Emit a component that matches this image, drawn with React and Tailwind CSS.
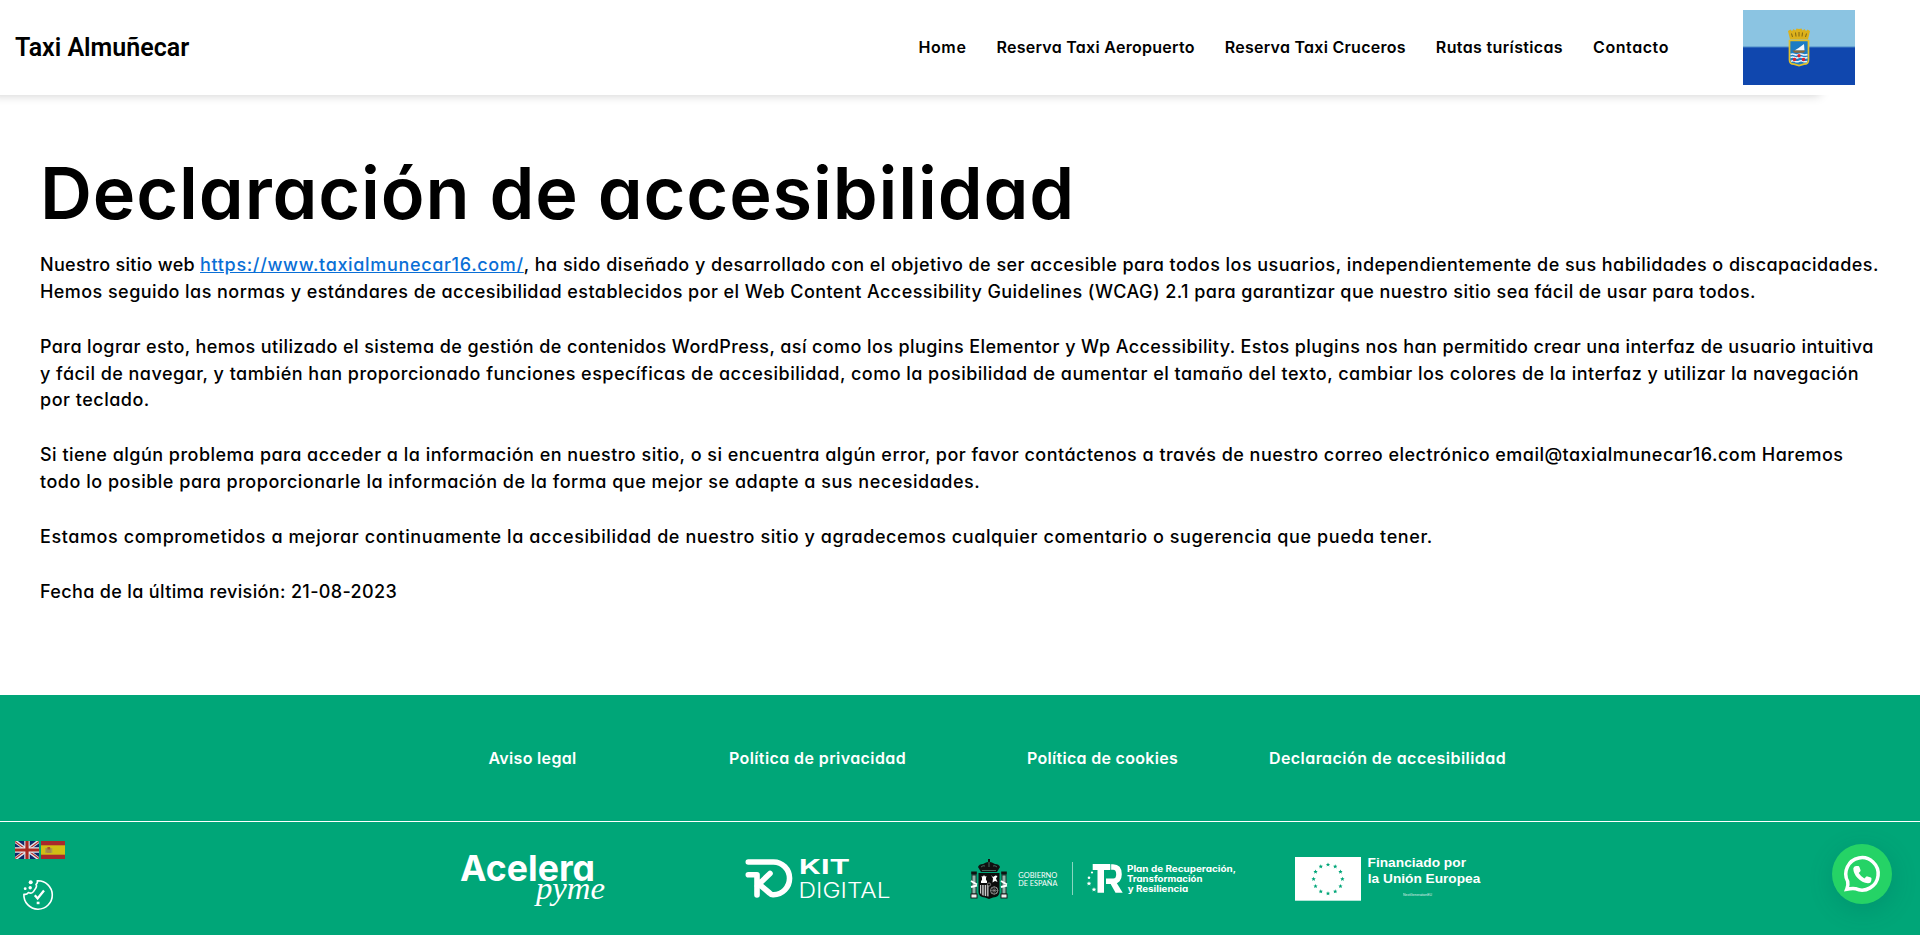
const navItems = [
  { label: "Home", spacing: "tracking-[0.6px]" },
  { label: "Reserva Taxi Aeropuerto", spacing: "tracking-[0.27px]" },
  { label: "Reserva Taxi Cruceros", spacing: "tracking-[0.27px]" },
  { label: "Rutas turísticas", spacing: "tracking-[0.36px]" },
  { label: "Contacto", spacing: "tracking-[0.58px]" },
];

const legalLinks = [
  { label: "Aviso legal", spacing: "tracking-[0.33px]" },
  { label: "Política de privacidad", spacing: "tracking-[0.41px]" },
  { label: "Política de cookies", spacing: "tracking-[0.31px]" },
  { label: "Declaración de accesibilidad", spacing: "tracking-[0.45px]" },
];

function MunicipalFlag() {
  return (
    <svg className="h-[75px] w-[112px]" viewBox="0 0 112 75" role="img" aria-label="Bandera de Almuñécar">
      <rect width="112" height="75" fill="#8bc4e2" />
      <rect y="37" width="112" height="38" fill="#1047ae" />
      <rect y="36.500" width="112" height="1" fill="#4a88c8" />
      <path d="M45 21l2.500-1.500 1.500 1.500 1.500-2 2 1.500 1-2 2.500 0.500 2.500-.5 1 2 2-1.500 1.500 2 1.500-1.500L67 21l-2 8.500H47z" fill="#dcb11c" />
      <path d="M48.500 23.500l1 3.500M52.500 22.500l.5 4M56 22v4.500M59.500 22.500l-.5 4M63.500 23.500l-1 3.500" stroke="#745c12" strokeWidth="0.900" />
      <path d="M46.500 30.500H65.500V50Q65.500 54 61 54.200L56 55.500 51 54.200Q46.500 54 46.500 50z" fill="#1b7cc4" stroke="#e3c02a" strokeWidth="1.700" />
      <path d="M51.500 40.500Q56 38 61 34L61.500 40.500z" fill="#f4f7fa" />
      <path d="M49.500 40.500h13l-2 2.300h-9z" fill="#8d6a3a" />
      <path d="M47.500 44.500q2-1 4 0t4 0 4 0 5 0M47.500 47.500q2-1 4 0t4 0 4 0 5 0M48 51.300q2-1 4 0t4 0 4 0 4 0" stroke="#e9f3fb" strokeWidth="1.500" fill="none" />
      <circle cx="56" cy="45.800" r="1.700" fill="#d8232f" />
      <circle cx="51.500" cy="49.500" r="1.800" fill="#d8232f" />
      <circle cx="60.500" cy="49.500" r="1.800" fill="#d8232f" />
    </svg>
  );
}

function AceleraPyme() {
  return (
    <svg className="h-[113px] w-[285px]" viewBox="390 822 285 113" fill="#fff">
      <text x="460" y="881" fontFamily="Inter" fontWeight="700" fontSize="35.500" textLength="135" lengthAdjust="spacingAndGlyphs">Acelera</text>
      <text x="536" y="898.700" fontFamily="Liberation Serif" fontStyle="italic" fontSize="32" textLength="69" lengthAdjust="spacingAndGlyphs">pyme</text>
    </svg>
  );
}

function KitDigital() {
  return (
    <svg className="h-[113px] w-[285px]" viewBox="675 822 285 113" fill="#fff">
      <g fill="none" stroke="#fff" strokeWidth="5.600" strokeLinecap="round" strokeLinejoin="round">
        <path d="M748.300 862H773.500A16 16.300 0 0 1 773.500 894.700Q771.500 895 769.500 893L759 884" />
        <path d="M748.300 874.700H757V895M770 873.500L757 886" />
      </g>
      <text x="799" y="874.200" fontFamily="Inter" fontWeight="700" fontSize="20.500" textLength="51" lengthAdjust="spacingAndGlyphs">KIT</text>
      <text x="798.500" y="897.800" fontFamily="Inter" fontWeight="300" fontSize="21" textLength="92" lengthAdjust="spacingAndGlyphs">DIGITAL</text>
    </svg>
  );
}

function Column({ x }) {
  return (
    <g>
      <rect x={x} y="875" width="4" height="19" fill="#8fb5aa" stroke="#222" strokeWidth="0.900" />
      <rect x={x - 0.800} y="871.500" width="5.600" height="3" fill="#111" />
      <rect x={x - 1} y="894" width="6" height="4" fill="#eee" stroke="#111" strokeWidth="0.900" />
      <path d={`M${x - 1} 881l6 3.500M${x - 1} 887l6-1.500`} stroke="#fff" strokeWidth="2" />
    </g>
  );
}

function Gobierno() {
  return (
    <svg className="h-[113px] w-[285px]" viewBox="960 822 285 113" fill="#fff">
      <Column x={972} />
      <Column x={1002} />
      <path d="M981 872l-3-5q1-3 5-3l3-1.500 2-.5v-3h2v3l2 .5 3 1.500q4 0 5 3l-3 5z" fill="#111" />
      <path d="M981 867q2-2 4-1M997 867q-2-2-4-1M989 862v5M982 870.500h14" stroke="#5d8f80" strokeWidth="0.700" fill="none" />
      <path d="M978.500 873H999.500V892Q999.500 897 993 897.500L989 899 985 897.500Q978.500 897 978.500 892z" fill="#0c0c0c" />
      <path d="M981 883v-2l1-1v-2l-.5-2 1.500.5 1-1.500 1 1.500 1.500-.5-.5 2v2l1 1v2zM991 875l2 2 2.500-1.500 2 .5-1.500 2.500 1.500 3.500-2.500-1-2.500 1.500.5-4z" fill="#fff" />
      <path d="M980 885h8.500v11.500q-7-.5-8.500-3.500z" fill="#ccc" />
      <path d="M981.700 885v10M984.200 885v11.500M986.700 885v12" stroke="#111" strokeWidth="1" />
      <circle cx="994.200" cy="890.500" r="3.700" fill="none" stroke="#bbb" strokeWidth="0.700" />
      <path d="M990.500 890.500h7.500M994.200 886.500v8M991.500 888l5.500 5M997 888l-5.500 5" stroke="#999" strokeWidth="0.600" />
      <circle cx="989" cy="884.500" r="1.600" fill="#111" stroke="#ddd" strokeWidth="0.500" />
      <text x="1018.300" y="878" fontFamily="Lato" fontSize="7.300" textLength="39" lengthAdjust="spacingAndGlyphs">GOBIERNO</text>
      <text x="1018.300" y="885.800" fontFamily="Lato" fontSize="7.300" textLength="39" lengthAdjust="spacingAndGlyphs">DE ESPAÑA</text>
      <rect x="1072" y="862" width="0.900" height="33" opacity="0.600" />
      <path d="M1092.700 864H1110V870H1104V892.700H1097.500V870H1092.700z" />
      <path d="M1106 867H1113Q1119 867 1119 874.200T1113 881.200H1106" fill="none" stroke="#fff" strokeWidth="5.600" />
      <path d="M1109 881h6.500L1122.700 892.700H1115.500z" />
      <path d="M1110.700 864v6" stroke="#00a678" strokeWidth="0.800" />
      <g>
        <circle cx="1092" cy="872.500" r="1.100" />
        <circle cx="1089" cy="877.800" r="1.300" />
        <path d="M1089 881.200l.7 1.500 1.600.1-1.200 1.100.4 1.600-1.500-.9-1.500.9.4-1.600-1.200-1.100 1.600-.1z" />
        <path d="M1094 887.200l.7 1.500 1.600.1-1.200 1.100.4 1.600-1.500-.9-1.500.9.4-1.600-1.200-1.100 1.600-.1z" />
      </g>
      <g fontFamily="Inter" fontWeight="700" fontSize="9">
        <text x="1127" y="872.300" textLength="109" lengthAdjust="spacingAndGlyphs">Plan de Recuperación,</text>
        <text x="1127" y="882" textLength="75.500" lengthAdjust="spacingAndGlyphs">Transformación</text>
        <text x="1127.700" y="891.700" textLength="60.500" lengthAdjust="spacingAndGlyphs">y Resiliencia</text>
      </g>
    </svg>
  );
}

const starAngles = [0, 30, 60, 90, 120, 150, 180, 210, 240, 270, 300, 330];

function UnionEuropea() {
  return (
    <svg className="h-[113px] w-[285px]" viewBox="1245 822 285 113" fill="#fff">
      <rect x="1295" y="857" width="66" height="43.700" />
      {starAngles.map((deg) => {
        const a = (deg * Math.PI) / 180;
        return (
          <path
            key={deg}
            transform={`translate(${1328 + 14.4 * Math.sin(a)} ${879 - 14.4 * Math.cos(a)})`}
            d="M0-2.200L.65-.7 2.100-.7 1 .4 1.400 1.900 0 1-1.400 1.900-1 .4-2.100-.7-.65-.7z"
            fill="#00a678"
          />
        );
      })}
      <g fontFamily="Liberation Sans" fontWeight="700" fontSize="13.600">
        <text x="1367.500" y="866.800" textLength="98.500" lengthAdjust="spacingAndGlyphs">Financiado por</text>
        <text x="1367.800" y="883" textLength="112.500" lengthAdjust="spacingAndGlyphs">la Unión Europea</text>
      </g>
      <text x="1403" y="895.700" fontFamily="Liberation Sans" fontSize="3.600" opacity="0.850" textLength="29" lengthAdjust="spacingAndGlyphs">NextGenerationEU</text>
    </svg>
  );
}

function LanguageFlags() {
  return (
    <div className="flex gap-0.5">
      <svg className="h-[18px] w-6" viewBox="0 0 24 18">
        <rect width="24" height="18" fill="#10296b" />
        <path d="M0 0L24 18M24 0L0 18" stroke="#e3e8ec" strokeWidth="3.400" />
        <path d="M0 0.500L9 7M24 0.500L15 7M0 17.500L9 11M24 17.500L15 11" stroke="#b5302c" strokeWidth="1.100" />
        <path d="M12 0V18M0 9H24" stroke="#e3e8ec" strokeWidth="5.400" />
        <path d="M12 0V18M0 9H24" stroke="#ab2920" strokeWidth="3.200" />
      </svg>
      <svg className="h-[18px] w-6" viewBox="0 0 24 18">
        <rect width="24" height="18" fill="#a82a2c" />
        <rect y="4.300" width="24" height="9.400" fill="#d0bf15" />
        <rect x="5" y="6.500" width="5.500" height="5.500" rx="1.500" fill="#a58a4c" />
        <path d="M6.500 6h2.500v2.500H6.500z" fill="#a8532a" />
        <path d="M4.700 7v5M10.800 7v5" stroke="#a39a56" strokeWidth="0.900" />
      </svg>
    </div>
  );
}

function CookieIcon() {
  return (
    <svg className="h-8 w-8" viewBox="22 59 32 32" fill="none" stroke="#fff">
      <path d="M37.300 60.800A14.200 14.200 0 1 1 23.900 74.200Q26.500 75 28.500 72.500 32.500 74.500 34.500 70 37.500 66.500 36 64.500 38 63 37.300 60.800z" strokeWidth="1.600" strokeLinejoin="round" />
      <path d="M34.800 75.200L37.600 78.500 44 70.500" strokeWidth="2.300" />
      <g fill="#fff" stroke="none">
        <rect x="36.700" y="81.700" width="2.800" height="2.500" />
        <circle cx="30.700" cy="62.200" r="2" />
        <circle cx="25.200" cy="68.700" r="1.400" />
        <circle cx="30.200" cy="67.700" r="1.700" />
      </g>
    </svg>
  );
}

function WhatsAppButton() {
  return (
    <div className="flex h-[60px] w-[60px] items-center justify-center rounded-full bg-[#25d366] shadow-[1px_6px_24px_0_rgba(7,94,84,0.24)]">
      <svg className="h-[60px] w-[60px]" viewBox="0 0 60 60">
        <path d="M14.800 45.200Q16.500 41 15.700 37.500A16.200 16.200 0 1 1 23.500 44.700Q19.500 44.300 14.800 45.200z" fill="none" stroke="#fff" strokeWidth="3.500" />
        <path
          d="M21.300 24.500q.3-2.200 2.700-2.500h2.200q.9 0 1.200.9l1.100 3.100q.3.900-.3 1.500l-1.500 1.600q2.100 3.600 5.700 5.300l1.700-1.700q.5-.6 1.400-.3l3.300 1.100q.8.300.7 1.300l-.3 2.300q-.4 2.300-3.200 2.200-6-.5-10.400-5.200-4.200-4.400-4.300-9.600z"
          fill="#fff"
        />
      </svg>
    </div>
  );
}

export default function App() {
  return (
    <div className="relative flex h-[935px] w-full flex-col overflow-hidden bg-white font-['Inter',sans-serif] text-black [font-feature-settings:'cv11']">
      <header className="flex h-[95px] shrink-0 items-center">
        <div className="-ml-5 flex h-full w-[1850px] shrink-0 items-center pl-[35px] shadow-[0_10px_10px_-10px_rgba(0,0,0,0.2)]">
          <div className="w-[903.500px] font-['Roboto',sans-serif] text-[25px] font-semibold">Taxi Almuñecar</div>
          <nav className="flex gap-[30px] pb-0.5 text-base font-semibold whitespace-nowrap">
            {navItems.map((item) => (
              <a key={item.label} className={item.spacing}>{item.label}</a>
            ))}
          </nav>
          <div className="-mr-[25px] ml-auto">
            <MunicipalFlag />
          </div>
        </div>
      </header>

      <main className="h-[600px] shrink-0 px-10 pt-14 whitespace-nowrap">
        <h1 className="text-[72px] leading-[84px] font-semibold tracking-[0.87px]">Declaración de accesibilidad</h1>
        <div className="flex flex-col gap-[28.2px] pt-[17px] text-lg leading-[26.8px] font-medium">
          <p>
            <span className="tracking-[0.29px]">Nuestro sitio web </span>
            <a className="tracking-[0.66px] text-[#0a6fd6] underline">https://www.taxialmunecar16.com/</a>
            <span className="tracking-[0.452px]">, ha sido diseñado y desarrollado con el objetivo de ser accesible para todos los usuarios, independientemente de sus habilidades o discapacidades.</span>
            <br />
            <span className="tracking-[0.443px]">Hemos seguido las normas y estándares de accesibilidad establecidos por el Web Content Accessibility Guidelines (WCAG) 2.1 para garantizar que nuestro sitio sea fácil de usar para todos.</span>
          </p>
          <p>
            <span className="tracking-[0.403px]">Para lograr esto, hemos utilizado el sistema de gestión de contenidos WordPress, así como los plugins Elementor y Wp Accessibility. Estos plugins nos han permitido crear una interfaz de usuario intuitiva</span>
            <br />
            <span className="tracking-[0.472px]">y fácil de navegar, y también han proporcionado funciones específicas de accesibilidad, como la posibilidad de aumentar el tamaño del texto, cambiar los colores de la interfaz y utilizar la navegación</span>
            <br />
            <span className="tracking-[0.5px]">por teclado.</span>
          </p>
          <p>
            <span className="tracking-[0.478px]">Si tiene algún problema para acceder a la información en nuestro sitio, o si encuentra algún error, por favor contáctenos a través de nuestro correo electrónico email@taxialmunecar16.com Haremos</span>
            <br />
            <span className="tracking-[0.51px]">todo lo posible para proporcionarle la información de la forma que mejor se adapte a sus necesidades.</span>
          </p>
          <p className="tracking-[0.585px]">Estamos comprometidos a mejorar continuamente la accesibilidad de nuestro sitio y agradecemos cualquier comentario o sugerencia que pueda tener.</p>
          <p className="tracking-[0.35px]">Fecha de la última revisión: 21-08-2023</p>
        </div>
      </main>

      <footer className="flex grow flex-col bg-[#00a678] text-white">
        <div className="flex h-[127px] justify-center border-b border-white">
          <div className="grid w-[1140px] grid-cols-4 items-center justify-items-center text-base font-semibold whitespace-nowrap">
            {legalLinks.map((item) => (
              <a key={item.label} className={item.spacing}>{item.label}</a>
            ))}
          </div>
        </div>
        <div className="mx-auto grid h-[113px] w-[1140px] grid-cols-4">
          <AceleraPyme />
          <KitDigital />
          <Gobierno />
          <UnionEuropea />
        </div>
      </footer>

      <div className="absolute bottom-6 left-[15px] flex flex-col gap-5">
        <LanguageFlags />
        <div className="pl-[7px]">
          <CookieIcon />
        </div>
      </div>
      <div className="absolute right-7 bottom-[31px]">
        <WhatsAppButton />
      </div>
    </div>
  );
}
